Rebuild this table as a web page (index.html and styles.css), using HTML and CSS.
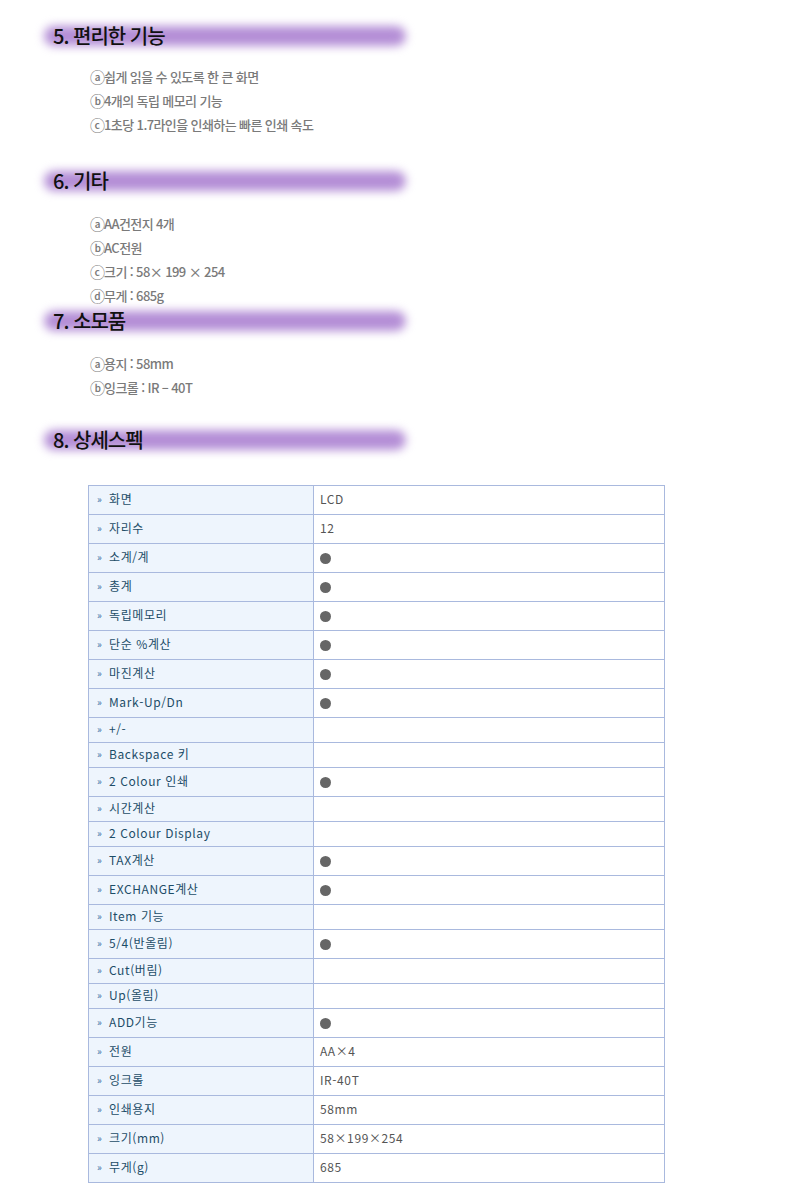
FILE: index.html
```html
<!DOCTYPE html>
<html lang="ko">
<head>
    <meta charset="UTF-8">
    <title>상품 상세 - 프린터 계산기</title>
    <link rel="stylesheet" href="styles.css">
</head>
<body>

<div class="detail">

    <h2 class="sec-title first">5. 편리한 기능</h2>
    <ul class="points">
        <li><span class="mark">ⓐ</span>쉽게 읽을 수 있도록 한 큰 화면</li>
        <li><span class="mark">ⓑ</span>4개의 독립 메모리 기능</li>
        <li><span class="mark">ⓒ</span>1초당 1.7라인을 인쇄하는 빠른 인쇄 속도</li>
    </ul>

    <h2 class="sec-title">6. 기타</h2>
    <ul class="points">
        <li><span class="mark">ⓐ</span>AA건전지 4개</li>
        <li><span class="mark">ⓑ</span>AC전원</li>
        <li><span class="mark">ⓒ</span>크기 : 58× 199 × 254</li>
        <li><span class="mark">ⓓ</span>무게 : 685g</li>
    </ul>

    <h2 class="sec-title tight">7. 소모품</h2>
    <ul class="points">
        <li><span class="mark">ⓐ</span>용지 : 58mm</li>
        <li><span class="mark">ⓑ</span>잉크롤 : IR – 40T</li>
    </ul>

    <h2 class="sec-title last">8. 상세스펙</h2>

    <table class="spec">
        <tr><th>화면</th><td>LCD</td></tr>
        <tr><th>자리수</th><td>12</td></tr>
        <tr><th>소계/계</th><td><span class="dot"></span></td></tr>
        <tr><th>총계</th><td><span class="dot"></span></td></tr>
        <tr><th>독립메모리</th><td><span class="dot"></span></td></tr>
        <tr><th>단순 %계산</th><td><span class="dot"></span></td></tr>
        <tr><th>마진계산</th><td><span class="dot"></span></td></tr>
        <tr><th>Mark-Up/Dn</th><td><span class="dot"></span></td></tr>
        <tr class="empty"><th>+/-</th><td></td></tr>
        <tr class="empty"><th>Backspace 키</th><td></td></tr>
        <tr><th>2 Colour 인쇄</th><td><span class="dot"></span></td></tr>
        <tr class="empty"><th>시간계산</th><td></td></tr>
        <tr class="empty"><th>2 Colour Display</th><td></td></tr>
        <tr><th>TAX계산</th><td><span class="dot"></span></td></tr>
        <tr><th>EXCHANGE계산</th><td><span class="dot"></span></td></tr>
        <tr class="empty"><th>Item 기능</th><td></td></tr>
        <tr><th>5/4(반올림)</th><td><span class="dot"></span></td></tr>
        <tr class="empty"><th>Cut(버림)</th><td></td></tr>
        <tr class="empty"><th>Up(올림)</th><td></td></tr>
        <tr><th>ADD기능</th><td><span class="dot"></span></td></tr>
        <tr><th>전원</th><td>AA×4</td></tr>
        <tr><th>잉크롤</th><td>IR-40T</td></tr>
        <tr><th>인쇄용지</th><td>58mm</td></tr>
        <tr><th>크기(mm)</th><td>58×199×254</td></tr>
        <tr><th>무게(g)</th><td>685</td></tr>
    </table>

</div>

</body>
</html>
```

FILE: styles.css
```css
body {
    margin: 0;
    padding: 0;
    background-color: #ffffff;
    font-family: "Noto Sans CJK KR", "Noto Sans", sans-serif;
}
.detail {
    padding: 0 0 12px;
}
/* Section headings with the blurred purple bar */
.sec-title {
    position: relative;
    width: 357px;
    height: 30px;
    margin: 29px 0 0 40px;
    padding-left: 13px;
    font-size: 20px;
    font-weight: 500;
    line-height: 30px;
    letter-spacing: -1px;
    color: #111111;
    z-index: 0;
}
.sec-title.first {
    margin-top: 21px;
}
.sec-title.tight {
    margin-top: -2px;
}
.sec-title.last {
    margin-top: 25px;
}
.sec-title::before {
    content: "";
    position: absolute;
    left: 4px;
    right: 4px;
    top: 5px;
    bottom: 5px;
    background-color: #b48ed6;
    border-radius: 10px;
    filter: blur(5px);
    z-index: -1;
}
.points {
    list-style: none;
    margin: 16px 0 0 90px;
    padding: 0;
}
.sec-title.first + .points {
    margin-top: 14px;
}
.points li {
    height: 24px;
    line-height: 24px;
    font-size: 13px;
    font-weight: 500;
    letter-spacing: -0.6px;
    color: #7a7a7a;
}
.points .mark {
    font-size: 15px;
    line-height: 1;
    letter-spacing: -1px;
    vertical-align: -1px;
}
/* Spec table */
.spec {
    border-collapse: collapse;
    width: 577px;
    margin: 30px 0 0 88px;
    font-size: 12px;
    letter-spacing: 0.6px;
}
.spec th,
.spec td {
    height: 25px;
    padding: 0 0 3px;
    border: 1px solid #a9b9de;
    text-align: left;
    font-weight: normal;
    line-height: 16px;
    vertical-align: middle;
}
.spec .empty th,
.spec .empty td {
    height: 21px;
}
.spec th {
    width: 204px;
    background-color: #eef5fd;
    color: #1d4d68;
    padding-left: 20px;
    position: relative;
}
.spec th::before {
    content: "»";
    position: absolute;
    left: 8px;
    font-size: 10px;
    color: #3a6ea5;
}
.spec td {
    padding-left: 6px;
    color: #555555;
}
.dot {
    display: inline-block;
    width: 11px;
    height: 11px;
    border-radius: 50%;
    background-color: #666666;
    vertical-align: middle;
}
```
